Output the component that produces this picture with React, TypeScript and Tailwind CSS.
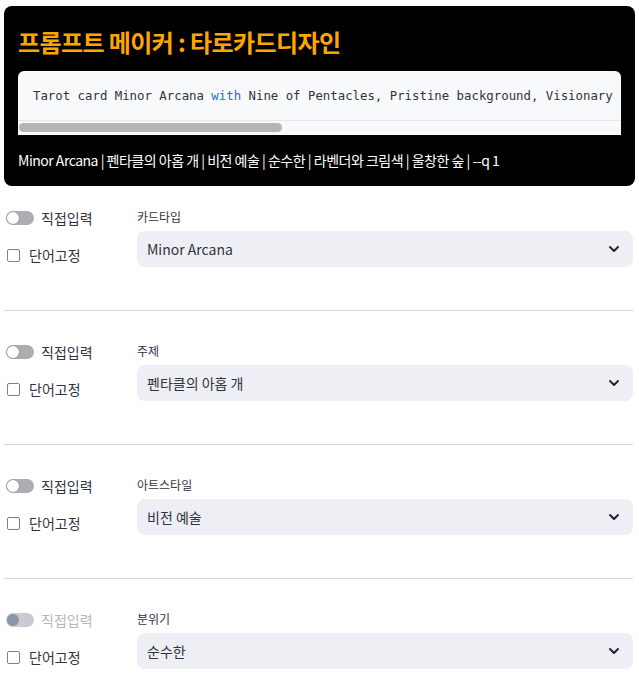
import React from "react";

const KR = { fontFamily: '"Noto Sans CJK KR", "Noto Sans", sans-serif' };

function Toggle({ disabled }: { disabled?: boolean }) {
  return (
    <div className={`relative h-[14px] w-[28px] rounded-full ${disabled ? "bg-[#c9cbd1]" : "bg-[#acaeb3]"}`}>
      <div
        className={`absolute left-[1px] top-[1px] h-[12px] w-[12px] rounded-full ${disabled ? "bg-[#8d93a8]" : "bg-white shadow-[0_0_2px_rgba(0,0,0,0.35)]"}`}
      />
    </div>
  );
}

function Chevron() {
  return (
    <svg width="12" height="8" viewBox="0 0 12 8" fill="none">
      <path d="M2 2 L6 6 L10 2" stroke="#262730" strokeWidth="2" strokeLinecap="round" strokeLinejoin="round" />
    </svg>
  );
}

function Section({ label, value, disabled, last }: { label: string; value: string; disabled?: boolean; last?: boolean }) {
  return (
    <div className={`${last ? "" : "border-b border-[#d6d6d9]"} pb-[43px]`}>
      <div className="flex">
        <div className="w-[133px] shrink-0 pl-[2px]">
          <div className="flex h-[14px] items-center gap-[7px]">
            <Toggle disabled={disabled} />
            <span className={`text-[14px] leading-none ${disabled ? "text-[#b5b7bd]" : "text-[#31333f]"}`}>직접입력</span>
          </div>
          <div className="mt-[23px] flex items-center gap-[9px] pl-[1px]">
            <div className="h-[13px] w-[13px] rounded-[2px] border border-[#7e8088] bg-white" />
            <span className="text-[14px] leading-none text-[#31333f]">단어고정</span>
          </div>
        </div>
        <div className="flex-1">
          <div className="text-[12px] leading-none text-[#31333f]">{label}</div>
          <div className="mt-[8px] flex h-[36px] items-center justify-between rounded-[8px] bg-[#eeeff4] pl-[10px] pr-[13px]">
            <span className="text-[14px] text-[#31333f]">{value}</span>
            <Chevron />
          </div>
        </div>
      </div>
    </div>
  );
}

export default function App() {
  return (
    <div className="min-h-[687px] bg-white px-[4px] pt-[6px]" style={KR}>
      <div className="rounded-[8px] bg-black px-[14px] pb-[17px] pt-[22px]">
        <h1 className="text-[24px] font-bold leading-[28px] tracking-[-0.025em] text-[#ffa500]">프롬프트 메이커 : 타로카드디자인</h1>
        <div className="mt-[15px] overflow-hidden rounded-t-[6px] bg-[#f8f9fb]">
          <div className="h-[49px] whitespace-pre pl-[15px] pt-[17px] text-[12.35px] leading-[16px] text-[#31333f]" style={{ fontFamily: '"DejaVu Sans Mono", monospace' }}>
            Tarot card Minor Arcana <span className="text-[#1a6fd3]">with</span> Nine of Pentacles, Pristine background, Visionary
          </div>
          <div className="h-[15px] border-t border-[#e6e7ea] bg-[#f8f9fb] pl-[1px] pt-[2px]">
            <div className="h-[9px] w-[263px] rounded-full bg-[#b5b5b5]" />
          </div>
        </div>
        <div className="mt-[16px] text-[14px] font-normal leading-[18px] tracking-[-0.035em] text-white">
          Minor Arcana | 펜타클의 아홉 개 | 비전 예술 | 순수한 | 라벤더와 크림색 | 울창한 숲 | --q 1
        </div>
      </div>
      <div className="mt-[25px] pr-[2px]">
        <div className="flex flex-col gap-[34px]">
          <Section label="카드타입" value="Minor Arcana" />
          <Section label="주제" value="펜타클의 아홉 개" />
          <Section label="아트스타일" value="비전 예술" />
          <Section label="분위기" value="순수한" disabled last />
        </div>
      </div>
    </div>
  );
}
